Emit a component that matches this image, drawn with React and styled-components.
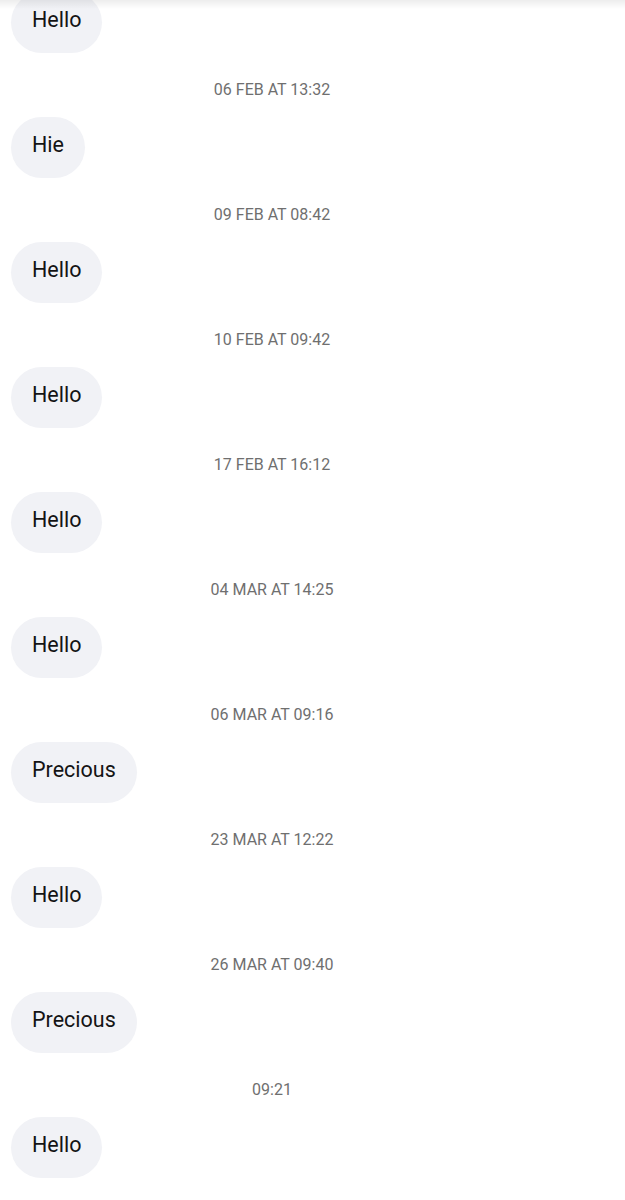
import React from 'react';
import styled, { createGlobalStyle } from 'styled-components';

const GlobalStyle = createGlobalStyle`
  html, body {
    margin: 0;
    padding: 0;
    background: #ffffff;
    font-family: Roboto, "Noto Sans", "Liberation Sans", sans-serif;
  }
`;

const Page = styled.div`
  position: relative;
  height: 1200px;
  overflow: hidden;
  background: #ffffff;
`;

// soft shadow under the (scrolled away) header
const HeaderShade = styled.div`
  position: absolute;
  top: 0;
  left: 0;
  right: 0;
  height: 9px;
  background: linear-gradient(to bottom, rgba(0, 0, 0, 0.07), rgba(0, 0, 0, 0));
  pointer-events: none;
`;

const Thread = styled.div`
  width: 544px;
  margin-top: -8px;
  display: flex;
  flex-direction: column;
  align-items: flex-start;
`;

const Stamp = styled.div`
  align-self: stretch;
  padding: 28px 0 18px;
  height: 18px;
  line-height: 18px;
  text-align: center;
  font-size: 16px;
  color: #6f6f6f;
`;

const Bubble = styled.div`
  margin-left: 11px;
  height: 61px;
  box-sizing: border-box;
  padding: 0 21px 6px;
  display: flex;
  align-items: center;
  border-radius: 31px;
  background: #f1f2f6;
  color: #141414;
  font-size: 21.5px;
`;

const messages = [
  { stamp: null, text: 'Hello' },
  { stamp: '06 FEB AT 13:32', text: 'Hie' },
  { stamp: '09 FEB AT 08:42', text: 'Hello' },
  { stamp: '10 FEB AT 09:42', text: 'Hello' },
  { stamp: '17 FEB AT 16:12', text: 'Hello' },
  { stamp: '04 MAR AT 14:25', text: 'Hello' },
  { stamp: '06 MAR AT 09:16', text: 'Precious' },
  { stamp: '23 MAR AT 12:22', text: 'Hello' },
  { stamp: '26 MAR AT 09:40', text: 'Precious' },
  { stamp: '09:21', text: 'Hello' },
];

const App = () => {
  return (
    <Page>
      <GlobalStyle />
      <Thread>
        {messages.map((m, i) => (
          <React.Fragment key={i}>
            {m.stamp && <Stamp>{m.stamp}</Stamp>}
            <Bubble>{m.text}</Bubble>
          </React.Fragment>
        ))}
      </Thread>
      <HeaderShade />
    </Page>
  );
};

export default App;
